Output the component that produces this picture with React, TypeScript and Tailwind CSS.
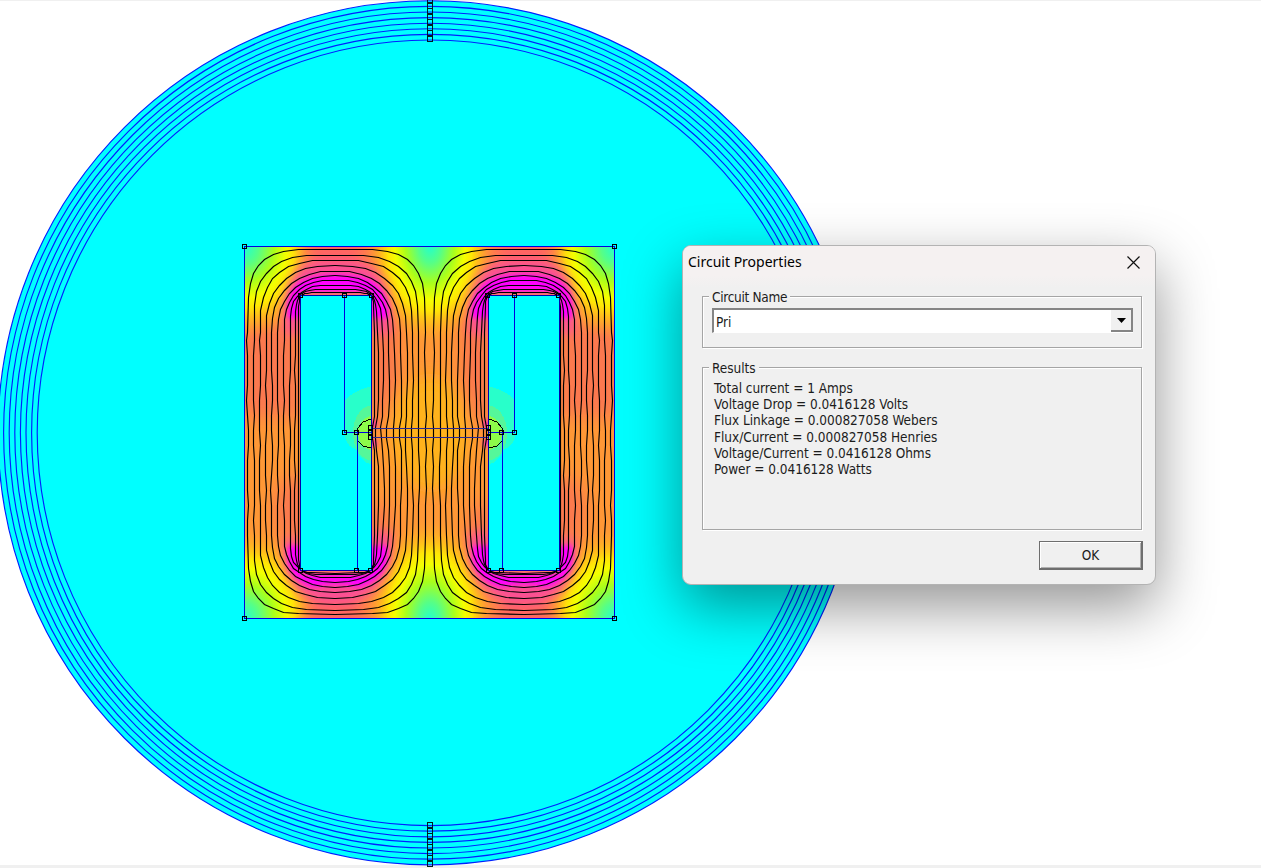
import React from "react";

type Pt = [number, number];

const CX = 430;
const CY = 432.8;
const RINGS = [0, 1, 2, 3, 4, 5, 6, 7].map((i) => 432 - i * 5.6);

const LEFT = [247.5, 254, 260, 266, 271.7, 277.7, 284, 290, 295, 298.5];
const TOP = [249, 255, 260, 265.5, 271, 275.5, 280, 285, 289.5, 292.5];
const BOTTOM = [614.5, 610, 604, 598, 592.5, 587, 582, 577.5, 574.5, 573];
const UPPER = [425, 418.5, 412.5, 406, 400, 393.5, 388, 382, 377, 374];
const MID = [426, 419, 413, 407.5, 401.5, 395.5, 389.5, 384, 379, 374.5];
const GAP = [425.5, 418.5, 412, 405.5, 399.5, 393, 387, 381, 375.5, 372.5];
const EXP = [4, 3.3, 2.9, 2.5, 2.35, 2.3, 2.5, 3.1, 4.8, 8];

function corner(x0: number, y0: number, x1: number, y1: number, n: number): Pt[] {
  const pts: Pt[] = [];
  for (let i = 0; i <= 9; i++) {
    const t = (i / 9) * (Math.PI / 2);
    const u = Math.pow(Math.max(0, Math.cos(t)), 2 / n);
    const v = Math.pow(Math.sin(t), 2 / n);
    pts.push([x1 + (x0 - x1) * u, y0 + (y1 - y0) * v]);
  }
  return pts;
}

function wobble(k: number, y: number) {
  return Math.sin(k * 2.7 + y * 0.09) * 0.55 + Math.sin(k * 5.1 + y * 0.031) * 0.5;
}

function loop(k: number): Pt[] {
  const n = EXP[k];
  const mx = 335;
  const pts: Pt[] = [];
  const y0 = 332;
  const y1 = 535;
  pts.push(...corner(LEFT[k], y0, mx, TOP[k], n));
  pts.push(...corner(UPPER[k], y0, mx, TOP[k], n).reverse());
  const side: Pt[] = [
    [UPPER[k] + (k > 2 ? 0.8 : 0), 352],
    [MID[k], 380],
    [(MID[k] + GAP[k]) / 2 + (k > 3 ? 0.8 : 0), 400],
    [GAP[k] + (k > 3 ? 1.6 : 0.5), 416],
    [GAP[k], 427],
    [GAP[k], 438],
    [GAP[k] + (k > 3 ? 1.8 : 0.5), 450],
    [(MID[k] + GAP[k]) / 2 + (k > 3 ? 1 : 0), 466],
    [MID[k], 488],
    [MID[k] - 0.3, 505],
  ];
  pts.push(...side.map(([x, y]): Pt => [x + wobble(k, y) * 0.5, y]));
  pts.push(...corner(UPPER[k], y1, mx, BOTTOM[k], n));
  pts.push(...corner(LEFT[k], y1, mx, BOTTOM[k], n).reverse());
  for (let y = 520; y > 337; y -= 15) pts.push([LEFT[k] + wobble(k, y) * (k === 9 ? 0.4 : 1), y]);
  return pts.map(([x, y]): Pt => [Math.floor(x) + 0.5, Math.floor(y) + 0.5]);
}

const LOOPS = LEFT.map((_, k) => loop(k));
const line = (p: Pt[]) => p.map(([x, y]) => `${x},${y}`).join(" ");
const mirror = (p: Pt[]) => p.map(([x, y]): Pt => [859 - x, y]);

const NODES: Pt[] = [
  [245, 247], [615, 247], [245, 619], [615, 619],
  [301, 296], [345, 296], [372, 296], [488, 296], [515, 296], [559, 296],
  [301, 571], [357, 571], [371, 571], [489, 571], [502, 571], [559, 571],
  [345, 433], [357, 433], [502, 433], [515, 433],
  [371, 428], [371, 433], [371, 438], [489, 428], [489, 433], [489, 438],
];

function LegHeat() {
  return (
    <g filter="url(#soft9)">
      <rect x="240" y="325" width="62" height="92" fill="#fb7850" />
      <path d="M369 315H398V375L385 424H371Z" fill="#fa754f" />
      <ellipse cx="296" cy="510" rx="22" ry="34" fill="#fb7850" />
      <ellipse cx="378" cy="530" rx="13" ry="30" fill="#fb7850" />
      <ellipse cx="430" cy="433" rx="34" ry="52" fill="#ffb21c" />
    </g>
  );
}

function YokeHeat() {
  return (
    <g>
      <g filter="url(#soft9)">
        <ellipse cx="336" cy="246" rx="32" ry="34" fill="#ff665f" />
        <ellipse cx="336" cy="620" rx="32" ry="30" fill="#ff665f" />
      </g>
      <g filter="url(#soft5)">
        <path d="M284 334V308Q288 266 316 260H356Q386 266 391 308V334H372V290H301V334Z" fill="#fb4f94" />
        <path d="M284 538V562Q291 596 322 604H350Q382 596 391 560V532H370V576H301V538Z" fill="#fb4f94" />
      </g>
      <g filter="url(#soft3)">
        <path d="M288 318V304Q291 283 308 278Q337 271 365 278Q384 285 388 308V318H371V292H301V318Z" fill="#ff00ff" />
        <path d="M288 546V562Q293 582 314 587Q337 581 358 587Q381 582 387 560V546H370V574H301V546Z" fill="#ff00ff" />
        <circle cx="373" cy="424" r="4" fill="#ff20c0" />
        <circle cx="373" cy="443" r="4" fill="#ff20c0" />
      </g>
    </g>
  );
}

function WindowFill() {
  return (
    <g>
      <rect x="301" y="296" width="71" height="275" fill="#00ffff" />
      <g clipPath="url(#slot)">
        <path d="M345 401Q352 391 372 386V465Q360 461 357 450Q345 446 345 433Z" fill="#2cffc4" opacity=".9" />
        <ellipse cx="373" cy="433" rx="20" ry="28" fill="#55f79a" />
        <ellipse cx="373" cy="433" rx="15" ry="17" fill="#8dfb4a" />
      </g>
      <path d="M371 419L363 422L358 428L357 435L358 441L363 446L371 448" stroke="#000" fill="none" />
    </g>
  );
}

const BENDS = [
  { cx: 245, cy: 247, rx: 76, ry: 92 },
  { cx: 615, cy: 247, rx: 76, ry: 92 },
  { cx: 245, cy: 619, rx: 76, ry: 92 },
  { cx: 615, cy: 619, rx: 76, ry: 92 },
  { cx: 430, cy: 245, rx: 64, ry: 100 },
  { cx: 430, cy: 621, rx: 64, ry: 104 },
];

function Field() {
  return (
    <svg width="1261" height="868" viewBox="0 0 1261 868" className="block">
      <defs>
        <clipPath id="core"><rect x="245" y="247" width="370" height="372" /></clipPath>
        <clipPath id="slot"><rect x="301" y="296" width="71" height="275" /></clipPath>
        <filter id="soft9" x="-40%" y="-40%" width="180%" height="180%"><feGaussianBlur stdDeviation="9" /></filter>
        <filter id="soft5" x="-30%" y="-30%" width="160%" height="160%"><feGaussianBlur stdDeviation="5.5" /></filter>
        <filter id="soft3" x="-30%" y="-30%" width="160%" height="160%"><feGaussianBlur stdDeviation="2.5" /></filter>
        <radialGradient id="bend">
          <stop offset="0" stopColor="#20ffd0" />
          <stop offset=".18" stopColor="#55ff88" />
          <stop offset=".38" stopColor="#a8ff1c" />
          <stop offset=".55" stopColor="#f4ff00" />
          <stop offset=".66" stopColor="#fff000" stopOpacity=".9" />
          <stop offset=".8" stopColor="#ffcc10" stopOpacity=".55" />
          <stop offset="1" stopColor="#ffa030" stopOpacity="0" />
        </radialGradient>
      </defs>
      <rect width="1261" height="868" fill="#fff" />
      <rect width="1261" height="1" fill="#f0f0f0" />
      <rect y="865" width="1261" height="3" fill="#f0f0f0" />
      {RINGS.map((r, i) => (
        <circle key={i} cx={CX} cy={CY} r={r} fill={i === 0 ? "#00ffff" : "none"} stroke="#0020ff" strokeWidth="1.15" />
      ))}
      <g shapeRendering="crispEdges">
        {[0, 825].map((y) => (
          <g key={y} fill="none" stroke="#001c20">
            {[0, 1, 2, 3, 4, 5, 6, 7].map((i) => (
              <rect key={i} x="427.5" y={Math.round(y - 2 + i * 5.5) - 0.5} width="5" height="5" />
            ))}
          </g>
        ))}
      </g>

      <g clipPath="url(#core)">
        <rect x="245" y="247" width="370" height="372" fill="#ff9836" />
        <LegHeat />
        <g transform="translate(860 0) scale(-1 1)"><LegHeat /></g>
        {BENDS.map((b, i) => (
          <ellipse key={i} {...b} fill="url(#bend)" />
        ))}
        <YokeHeat />
        <g transform="translate(860 0) scale(-1 1)"><YokeHeat /></g>
      </g>

      <g fill="none" stroke="#000" strokeWidth="1.15">
        {LOOPS.map((p, k) => (
          <g key={k}>
            <polygon points={line(p)} />
            <polygon points={line(mirror(p))} />
          </g>
        ))}
      </g>

      <g shapeRendering="crispEdges">
        <WindowFill />
        <g transform="translate(860 0) scale(-1 1)"><WindowFill /></g>
        <g stroke="#0000e0" fill="none">
          <path d="M244.5 246.5H614.5V618.5H244.5Z" />
          <path d="M344.5 296V432.5H371M514.5 296V432.5H489" />
          <path d="M357.5 433V571M502.5 433V571" />
          <path d="M371 428.5H489M371 437.5H489" stroke="#282890" />
          <path d="M300.5 295.5H371.5V570.5H300.5ZM488.5 295.5H559.5V570.5H488.5Z" stroke="#0000b0" />
        </g>
        <g fill="none" stroke="#000">
          {NODES.map(([x, y], i) => (
            <rect key={i} x={x - 2.5} y={y - 2.5} width="4" height="4" />
          ))}
        </g>
      </g>
    </svg>
  );
}

const RESULTS = [
  "Total current = 1 Amps",
  "Voltage Drop = 0.0416128 Volts",
  "Flux Linkage = 0.000827058 Webers",
  "Flux/Current = 0.000827058 Henries",
  "Voltage/Current = 0.0416128 Ohms",
  "Power = 0.0416128 Watts",
];

const GROUP =
  "m-0 min-w-0 border border-[#a5a5a5] shadow-[1px_1px_0_#fff,inset_1px_1px_0_#fff]";

function CircuitDialog() {
  return (
    <div
      role="dialog"
      className="absolute left-[682px] top-[245px] flex h-[340px] w-[474px] flex-col rounded-[9px] border border-[#b3b3b3] bg-[#f0f0f0] font-['DejaVu_Sans_Condensed','DejaVu_Sans',sans-serif] text-[13.5px] leading-4 tracking-[-0.03px] text-[#1c1c1c] shadow-[0_22px_58px_rgba(0,0,0,0.42)]"
    >
      <div className="flex h-[42px] shrink-0 items-start justify-between rounded-t-lg bg-linear-to-b from-[#f5f1f1] from-70% to-[#f0f0f0] pl-[5px] pr-[15px] font-['Noto_Sans',sans-serif]">
        <h1 className="pt-[6px] text-[14px] leading-5 tracking-normal text-black">Circuit Properties</h1>
        <button aria-label="Close" className="mt-[10px]">
          <svg width="13" height="13" viewBox="0 0 13 13" fill="none" stroke="#111" strokeWidth="1.2">
            <path d="M.5 .5L12.5 12.5M12.5 .5L.5 12.5" />
          </svg>
        </button>
      </div>

      <div className="flex flex-col px-[19px]">
        <fieldset className={`${GROUP} h-[60px] w-[440px] pl-[9px] pr-[8px]`}>
          <legend className="ml-[-3px] h-4 bg-[#f0f0f0] px-[3px] pt-px tracking-[-0.3px]">Circuit Name</legend>
          <div className="mt-[4px] flex h-[25px] w-[421px] border-t-2 border-l-2 border-[#858585] border-b border-r-0 border-b-white bg-white">
            <span className="flex-1 pl-[2px] pt-[4px] leading-4">Pri</span>
            <span className="flex w-[22px] items-center justify-center border-b-2 border-r-2 border-[#858585] bg-[#f0f0f0]">
              <svg width="9" height="5" viewBox="0 0 9 5" fill="#000">
                <path d="M0 0H9L4.5 5Z" />
              </svg>
            </span>
          </div>
        </fieldset>

        <fieldset className={`${GROUP} mt-[11px] h-[171px] w-[440px] pl-[11px]`}>
          <legend className="ml-[-5px] h-4 bg-[#f0f0f0] px-[3px] pt-px">Results</legend>
          <div className="pt-[5px]">
            {RESULTS.map((text) => (
              <p key={text} className="h-[16.2px] whitespace-nowrap">{text}</p>
            ))}
          </div>
        </fieldset>

        <button className="mr-[-7px] mt-[11px] flex h-[29px] w-[104px] items-center justify-center self-end border border-b-2 border-r-2 border-[#6e6e6e] bg-[#f0f0f0] shadow-[inset_1px_1px_0_#fff,inset_-1px_-1px_0_#b0b0b0]">
          OK
        </button>
      </div>
    </div>
  );
}

export default function App() {
  return (
    <main className="relative h-[868px] w-[1261px] overflow-hidden bg-white">
      <Field />
      <CircuitDialog />
    </main>
  );
}
